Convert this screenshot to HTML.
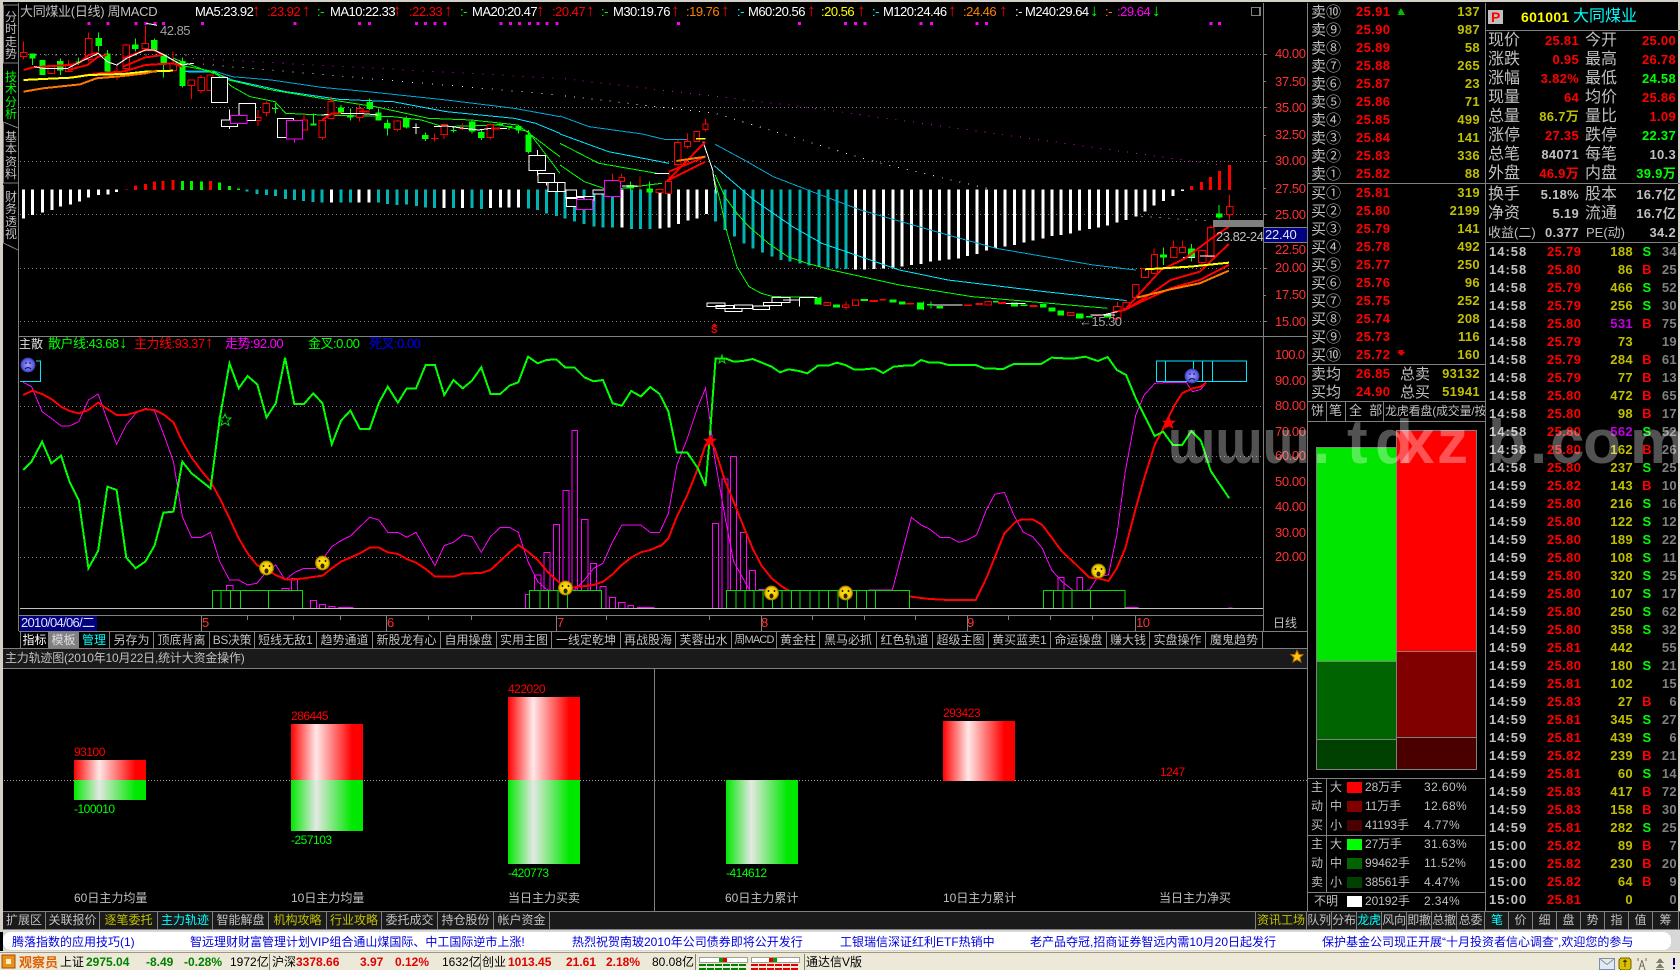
<!DOCTYPE html>
<html lang="zh"><head><meta charset="utf-8"><title>大同煤业</title>
<style>
html,body{margin:0;padding:0;background:#000}
body{position:relative;width:1680px;height:970px;overflow:hidden;font-family:"Liberation Sans","Noto Sans CJK SC",sans-serif;font-size:12px;color:#c0c0c0}
.a{position:absolute;white-space:nowrap}
svg{position:absolute;left:0;top:0}
svg *{vector-effect:non-scaling-stroke}
.n{font-size:13px;letter-spacing:-.5px;line-height:14px}
.ar{font-size:17px;line-height:14px;margin-left:-1px;font-family:"Liberation Sans",sans-serif}
.k{font-size:15px;line-height:18px;font-family:"Noto Sans CJK SC",sans-serif}
.v{font-size:13px;font-weight:bold;letter-spacing:.35px;line-height:18px}
.q{font-size:13px;font-weight:bold;letter-spacing:.3px;line-height:19px;text-align:right}
.l{font-size:16px;line-height:19px}
.r{text-align:right}
.o{color:#c0c000}.g{color:#00ff00}.red{color:#ff0000}.c{color:#00ffff}.m{color:#ff00ff}.w{color:#fff}
.b{position:absolute;top:632px;height:16px;line-height:16px;text-align:center;border-right:1px solid #808080;box-sizing:border-box;white-space:nowrap;overflow:hidden;font-size:12px}
.t{position:absolute;top:911px;height:18px;line-height:18px;text-align:center;border-right:1px solid #808080;box-sizing:border-box;white-space:nowrap;overflow:hidden;font-size:12px}
.ax{position:absolute;left:1275px;color:#ff3232;font-size:13px;letter-spacing:-.4px;line-height:14px}
.tab{position:absolute;left:4px;width:14px;text-align:center;font-size:12px;line-height:12.3px}
.lab{position:absolute;font-size:12px;letter-spacing:-.5px;line-height:14px;white-space:nowrap}
.tk{position:absolute;top:935px;color:#0000e0;font-size:12px;line-height:15px;white-space:nowrap}
.s{position:absolute;top:955px;font-size:12px;line-height:15px;white-space:nowrap;color:#000}
.sb{font-weight:bold}
</style></head><body>

<svg width="1680" height="970" viewBox="0 0 1680 970" shape-rendering="crispEdges">
<defs>
<linearGradient id="gr"><stop offset="0" stop-color="#f00"/><stop offset=".35" stop-color="#ffe8e8"/><stop offset=".85" stop-color="#f00"/><stop offset="1" stop-color="#f00"/></linearGradient>
<linearGradient id="gg"><stop offset="0" stop-color="#00e800"/><stop offset=".35" stop-color="#e4e8e4"/><stop offset=".85" stop-color="#00e800"/><stop offset="1" stop-color="#00e800"/></linearGradient>
<radialGradient id="fy"><stop offset="0" stop-color="#ffe820"/><stop offset=".75" stop-color="#f0c800"/><stop offset="1" stop-color="#806000"/></radialGradient>
<radialGradient id="fb"><stop offset="0" stop-color="#a0a0ff"/><stop offset=".8" stop-color="#5858e0"/><stop offset="1" stop-color="#303090"/></radialGradient>
<g id="fy1" shape-rendering="auto"><ellipse cx="0" cy="0" rx="7.5" ry="7.5" fill="url(#fy)"/><path d="M-3-3v2M3-3v2" stroke="#332200" stroke-width="1.5"/><ellipse cx="0" cy="3" rx="2" ry="2.5" fill="#332200"/></g>
<g id="fb1" shape-rendering="auto"><ellipse cx="0" cy="0" rx="7.5" ry="7.5" fill="url(#fb)"/><path d="M-3-2h2M1-2h2M-3 4q3-3 6 0" stroke="#101040" stroke-width="1" fill="none"/></g>
<clipPath id="wm"><rect x="1100" y="400" width="580" height="64"/></clipPath>
<clipPath id="chart"><rect x="19" y="3" width="1244" height="333"/></clipPath>
</defs>

<!-- frame -->
<rect x="0" y="0" width="1680" height="2" fill="#d4d0c8"/>
<rect x="0" y="0" width="3" height="932" fill="#d4d0c8"/>
<rect x="1678" y="2" width="2" height="928" fill="#d4d0c8"/>
<path fill="none" stroke="#808080" d="M18.5 3V631M19 336.500H1307M19 615.500H1263M1263.500 3V631M1307.500 3V911M1485.500 3V929M19 631.500H1307M3 648.500H1307M3 668.500H1307M3 911.500H1680M3 929.500H1680"/>
<rect x="3" y="649" width="1304" height="19" fill="#1a1a1a"/>
<rect x="3" y="912" width="1677" height="17" fill="#1a1a1a"/>

<!-- left tabs -->
<path fill="none" stroke="#808080" d="M3.500 5H18M3.500 5V63L18 63M3 122L6 123L18 128M3.500 123V183H18M3.500 185V243L18 250"/>

<!-- main grid -->
<path fill="none" stroke="#808080" stroke-dasharray="1 3" d="M20 54.500H1263M20 107.500H1263M20 161.500H1263M20 214.500H1263M20 268.500H1263M20 321.500H1263M20 406.500H1263M20 456.500H1263M20 507.500H1263M20 557.500H1263"/>
<path fill="none" stroke="#808080" d="M1263 54.500h4M1263 81.500h3M1263 107.500h4M1263 135.500h3M1263 161.500h4M1263 188.500h3M1263 214.500h4M1263 268.500h4M1263 295.500h3M1263 321.500h4"/>

<g clip-path="url(#chart)">
<!-- zoom1 group -->
<g transform="scale(.3571,.3333)">
<g fill="#f0f" opacity=".95"><path stroke="#f0f" stroke-width="3" stroke-dasharray="3 5" d="M245 71H255M298 71H308M377 71H387M405 71H415M430 71H440M454 71H464M563 71H573M822 71H832M1003 71H1013M1031 71H1041M1162 71H1172M1188 71H1198M1214 71H1224M1242 71H1252M1399 71H1409M1425 71H1435M1450 71H1460M1478 71H1488M1503 71H1513M1528 71H1538M1555 71H1565"/></g>
<path fill="none" stroke="#e000e0" stroke-dasharray="1 9" d="M540 175L1568 235"/>
<path fill="none" stroke="#e0e0e0" stroke-dasharray="1 9" d="M540 190L1568 285M100 165L540 165"/>
<!-- macd -->
<path fill="none" stroke="#fff" stroke-width="3" d="M66 568V655M91 568V645M119 568V638M145 568V630M170 568V620M197 568V614M222 568V605M248 568V593M276 568V585M302 568V583M326 568V576M928 568V608M1006 568V608M1034 568V608M1244 568V624M1295 568V624M1374 568V624M1401 568V622M1426 568V622M1452 568V622"/>
<path fill="none" stroke="#f00" stroke-width="3" d="M354 568V570M379 570V557M407 570V552M432 570V545M457 570V543M485 570V540M590 570V543"/>
<path fill="none" stroke="#00f000" stroke-width="3" d="M511 570V543M536 570V543M564 570V545M614 570V548M642 570V558M668 570V566"/>
<path fill="none" stroke="#00b4b4" stroke-width="3" d="M692 568V575M720 568V582M746 568V585M771 568V588M799 568V597M824 568V600M850 568V603M877 568V606M902 568V608M955 568V608M981 568V608M1060 568V608M1085 568V612M1112 568V615M1138 568V614M1166 568V618M1191 568V622M1217 568V624M1270 568V624M1322 568V624M1348 568V627M1480 568V625M1505 568V630M1530 568V640M1558 568V648"/>
<!-- MAs -->
<polyline fill="none" stroke="#00a8d8" points="510,213 600,213 650,230 760,240 900,262 1030,275 1250,300 1440,325 1568,350"/>
<polyline fill="none" stroke="#00e8ff" points="515,215 600,217 650,240 800,275 950,298 1100,305 1250,335 1440,355 1500,370 1568,400"/>
<polyline fill="none" stroke="#00ff00" points="458,165 510,197 600,215 640,240 760,270 900,295 1050,320 1200,355 1320,360 1450,375 1568,470"/>
<polyline fill="none" stroke="#00ff00" points="485,175 560,205 610,225 650,260 700,290 770,305 800,340 900,345 1100,350 1180,360 1240,380 1400,375 1480,395 1568,520"/>
<!-- wicks -->
<path fill="none" stroke="#f00" d="M66 125V178M143 195V220M192 180V215M248 98V185M327 190V240M353 130V210M407 78V155M485 155V212M536 240V297M563 225V280M588 225V272M722 330V378M746 305V350M852 342V390M903 355V420M927 290V355M1007 315V365M1113 360V395M1217 400V425M1244 370V417M1295 370V390M1373 370V418"/>
<path fill="none" stroke="#00ff00" d="M91 160V195M119 180V225M169 175V225M220 172V195M276 98V155M301 150V220M379 115V155M432 115V155M458 160V232M511 172V262M771 310V340M878 340V377M955 315V340M981 325V362M1035 295V330M1060 325V362M1085 358V407M1138 350V385M1191 397V423M1270 380V398M1322 360V400M1348 390V420M1400 370V380M1426 378V390M1452 378V400M1480 390V460"/>
<path fill="#000" stroke="#f00" d="M57 157h18v13h-18zM134 197h18v23h-18zM183 197h18v18h-18zM239 115h18v63h-18zM318 215h18v2h-18zM344 135h18v70h-18zM398 130h18v16h-18zM476 190h18v22h-18zM527 240h18v17h-18zM554 232h18v40h-18zM579 225h18v47h-18zM713 352h18v10h-18zM737 310h18v28h-18zM843 360h18v30h-18zM894 362h18v51h-18zM918 305h18v50h-18zM998 325h18v27h-18zM1104 363h18v25h-18zM1208 415h18v1h-18zM1235 373h18v30h-18zM1286 385h18v1h-18zM1364 373h18v40h-18z"/>
<path fill="#00ff00" d="M82 160h18v16h-18zM110 180h18v45h-18zM160 183h18v29h-18zM211 184h18v3h-18zM267 114h18v24h-18zM292 160h18v55h-18zM370 134h18v13h-18zM423 120h18v30h-18zM449 165h18v25h-18zM502 183h18v75h-18zM762 324h18v3h-18zM869 370h18v7h-18zM946 322h18v16h-18zM972 345h18v8h-18zM1026 306h18v21h-18zM1051 338h18v24h-18zM1076 369h18v17h-18zM1129 355h18v27h-18zM1182 405h18v12h-18zM1261 390h18v3h-18zM1313 364h18v30h-18zM1339 396h18v18h-18zM1391 372h18v3h-18zM1417 378h18v3h-18zM1443 378h18v14h-18zM1471 404h18v52h-18z"/>
<path fill="none" stroke="#fff" d="M642 328V387M1165 370V402M1155 382h20M1505 450V527M1530 547V557M410 70L440 76"/>
<path fill="#000" stroke="#fff" d="M592 232h45v75h-45zM620 360h45v20h-45zM669 310h47v52h-47zM777 355h45v58h-45zM1482 466h46v46h-46zM1507 520h46v27h-46zM1534 548h34v27h-34z"/>
<path fill="#000" stroke="#f0f" d="M645 346h46v25h-46zM802 361h45v56h-45z"/><path stroke="#f0f" d="M825 417V428"/>
<!-- thick MAs -->
<polyline fill="none" stroke="#f00" stroke-width="2" points="66,210 92,202 150,198 192,195 220,190 248,165 276,158"/>
<polyline fill="none" stroke="#f00" stroke-width="2" points="190,210 245,195 275,170 300,165"/>
<polyline fill="none" stroke="#f00" stroke-width="2" points="345,175 407,150 432,150 458,165"/>
<polyline fill="none" stroke="#f00" stroke-width="2" points="345,200 407,172 458,165"/>
<polyline fill="none" stroke="#f00" stroke-width="2" points="200,232 275,220 345,215 407,195 485,190 510,200"/>
<polyline fill="none" stroke="#ffff00" stroke-width="2" points="66,240 120,237 200,233 250,225 345,222 407,215 485,212"/>
<polyline fill="none" stroke="#ff7800" stroke-width="2" points="66,275 120,265 225,253 270,235 345,228 407,220 440,212"/>
<polyline fill="none" stroke="#fff" points="95,200 120,205 190,205 220,188 275,160 300,185 327,195 355,175 407,150 432,150 460,165 510,195 540,190"/>
<polyline fill="none" stroke="#fff" points="900,345 955,340 1005,340 1060,345"/>
<polyline fill="none" stroke="#fff" points="1215,380 1250,378 1300,385 1340,390 1375,385 1420,385"/>
<polyline fill="none" stroke="#f00" stroke-width="2" points="905,358 930,340 955,340"/>
<polyline fill="none" stroke="#f00" stroke-width="2" points="1005,335 1035,335"/>
<polyline fill="none" stroke="#f00" stroke-width="2" points="1375,385 1400,385"/>
</g>
<!-- zoom2 group -->
<g transform="translate(560,0) scale(.4847,.3333)">
<path stroke="#f0f" stroke-width="3" stroke-dasharray="3 5" fill="none" d="M241 71H250M491 71H500M586 71H595M607 71H616M626 71H635M742 71H751M763 71H772M857 71H866M877 71H886M1340 71H1349M1358 71H1367"/>
<path fill="none" stroke="#e000e0" stroke-dasharray="1 8" d="M10 236L500 320L1360 495"/>
<path fill="none" stroke="#e0e0e0" stroke-dasharray="1 8" d="M10 288L320 340L640 482L880 565M1200 650L1340 662"/>
<!-- macd -->
<path fill="none" stroke="#00b4b4" stroke-width="3" d="M10 568V655M30 568V665M50 568V672M70 568V680M89 568V683M108 568V683M147 568V687M166 568V687M186 568V687M321 568V665M340 568V690M360 568V710M380 568V730M398 568V745M418 568V758M437 568V770M456 568V780M475 568V785M495 568V790M514 568V797M534 568V800M553 568V803M572 568V805M590 568V807"/>
<path fill="none" stroke="#fff" stroke-width="3" d="M128 568V683M206 568V685M225 568V683M244 568V672M264 568V662M283 568V655M302 568V642M610 568V808M628 568V808M648 568V807M667 568V805M687 568V805M706 568V800M725 568V795M745 568V792M764 568V785M783 568V782M803 568V778M822 568V775M841 568V768M860 568V762M880 568V752M899 568V745M918 568V740M938 568V735M957 568V728M976 568V722M996 568V715M1015 568V708M1034 568V705M1053 568V700M1072 568V692M1092 568V687M1111 568V682M1130 568V677M1149 568V668M1168 568V660M1188 568V650M1207 568V635M1226 568V617M1245 568V603M1265 568V588M1284 568V573"/>
<path fill="none" stroke="#f00" stroke-width="3" d="M1303 570V558M1323 570V546M1342 570V531M1361 570V513M1381 570V495"/>
<!-- MAs -->
<polyline fill="none" stroke="#00a8d8" points="0,348 60,380 170,402 215,418 262,418"/>
<polyline fill="none" stroke="#00a8d8" points="320,433 380,480 440,530 520,575 620,630 800,705 900,745 1100,795 1188,810"/>
<polyline fill="none" stroke="#00e8ff" points="0,402 100,455 225,490"/>
<polyline fill="none" stroke="#00e8ff" points="318,497 360,550 400,600 480,680 540,730 600,760 700,810 800,840 1000,875 1170,902"/>
<polyline fill="none" stroke="#00ff00" points="0,430 80,490 200,520 225,520"/>
<polyline fill="none" stroke="#00ff00" points="320,525 340,590 365,640 390,680 430,730 470,770 510,790 560,810 700,855 850,890 1130,925"/>
<polyline fill="none" stroke="#00ff00" points="0,495 50,545 100,570 210,550"/>
<polyline fill="none" stroke="#00ff00" points="315,520 330,600 345,700 365,800 390,860 415,880 440,890 530,892"/>
<!-- candles -->
<path fill="none" stroke="#f00" d="M225 515V545M243 420V500M263 400V445M282 395V425M300 355V395M165 530V568M127 520V545M590 905V930M1150 905V960M1168 900V930M1226 745V822M1266 722V773M1284 722V758M1325 748V795M1381 585V660M1343 675V775"/>
<path fill="none" stroke="#00ff00" d="M145 545V570M185 545V580M1245 743V795M1303 732V785M1360 615V657M538 890V915M750 905V930M765 905V925"/>
<path fill="none" stroke="#f00" stroke-width="1" d="M108 520V545"/>
<path fill="#000" stroke="#fff" d="M-5 547h15v28h-15zM12 570h22v25h-22zM13 592h37v28h-37zM35 590h35v10h-35zM68 570h35v12h-35z"/>
<path fill="#000" stroke="#f0f" d="M34 598h33v30h-33zM92 541h33v48h-33z"/>
<path fill="#000" stroke="#f00" d="M122 532h11v13h-11zM198 568h14v10h-14zM218 545h12v35h-12zM236 427h14v67h-14zM257 425h12v15h-12zM276 395h12v30h-12zM295 372h10v16h-10zM545 908h13v8h-13zM583 915h13v7h-13zM603 900h13v16h-13zM640 902h15v2h-15zM660 898h12v2h-12zM715 910h14v2h-14zM835 915h14v2h-14zM858 911h14v2h-14zM877 905h13v10h-13zM905 908h14v2h-14zM970 917h14v2h-14zM1047 938h13v8h-13zM1100 945h14v2h-14zM1142 920h15v35h-15zM1162 908h13v17h-13zM1181 853h14v40h-14zM1200 805h14v27h-14zM1220 763h13v57h-13zM1260 742h13v31h-13zM1278 742h13v16h-13zM1317 752h16v36h-16zM1336 682h13v88h-13zM1375 620h13v23h-13z"/>
<path fill="#00ff00" d="M137 555h16v11h-16zM178 565h14v12h-14zM525 892h13v21h-13zM563 914h15v9h-15zM620 897h15v6h-15zM680 898h14v10h-14zM699 905h14v9h-14zM737 908h14v20h-14zM757 912h13v4h-13zM777 918h13v7h-13zM893 903h12v4h-12zM930 908h15v12h-15zM950 914h14v4h-14zM990 912h14v10h-14zM1008 922h14v13h-14zM1026 932h14v15h-14zM1065 940h15v16h-15zM1085 948h14v5h-14zM1122 942h15v10h-15zM1238 763h14v10h-14zM1296 745h14v28h-14zM1353 640h14v12h-14z"/>
<path fill="#000" stroke="#fff" d="M303 909h37v10h-37zM322 917h36v8h-36zM340 925h35v10h-35zM360 915h37v10h-37zM398 918h34v10h-34zM420 908h37v9h-37zM437 893h38v14h-38z"/>
<path fill="none" stroke="#fff" d="M460 900h35M495 892h35M494 892V920M128 558h32M195 520h30M770 915h60M920 910h40M1095 945h50M1285 773h25M1320 768h30"/>
<path fill="none" stroke="#fff" stroke-width="1" d="M295 425L315 510L322 580"/>
<rect x="281" y="414" width="19" height="4" fill="#ff0"/>
<!-- thick -->
<path fill="none" stroke="#f00" stroke-width="2" d="M220 545L300 425M225 515L300 470M225 540L300 485"/>
<path fill="none" stroke="#ff7800" stroke-width="2" d="M240 483L300 470"/>
<polyline fill="none" stroke="#f00" stroke-width="2" points="1140,937 1165,930 1190,890 1240,810 1290,775 1340,720 1380,680"/>
<polyline fill="none" stroke="#f00" stroke-width="2" points="1165,930 1210,890 1260,840 1320,815 1380,732"/>
<polyline fill="none" stroke="#f00" stroke-width="2" points="1165,930 1200,905 1260,865 1320,840 1380,795"/>
<polyline fill="none" stroke="#ff7800" stroke-width="2" points="1190,893 1260,868 1320,850 1380,812"/>
<polyline fill="none" stroke="#ff0" stroke-width="2" points="1207,808 1300,800 1380,788"/>
<path fill="none" stroke="#fff" d="M1120 945L1150 935"/>
<!-- S marker -->
<path fill="#f00" d="M319 970l6 8h-12z"/>
</g>
<rect x="1213" y="220" width="50" height="7" fill="#808080"/>
</g>

<!-- right axis blue box -->
<rect x="1263.500" y="227.500" width="44" height="15" fill="#000080" stroke="#808080"/>

<!-- indicator -->
<g transform="translate(0,335) scale(.42105,.3333)">
<polyline fill="none" stroke="#f0f" points="55,142 75,155 100,230 122,250 145,273 165,273 187,260 210,195 233,177 255,255 277,328 300,270 322,235 345,220 367,228 388,295 412,380 433,545 455,607 478,607 500,592 522,680 545,735 567,735 588,750 610,745 633,710 655,690 677,735 700,712 722,700 750,700 788,635 810,617 832,603 855,575 878,547 900,555 921,592 945,592 966,607 988,592 1033,692 1055,632 1077,622 1099,600 1121,605 1143,652 1165,605 1188,577 1210,577 1231,592 1254,680 1277,740 1300,765 1343,770 1365,765 1388,735 1410,700 1432,685 1455,620 1477,570 1522,570 1544,592 1568,592"/>
<path fill="none" stroke="#f0f" d="M538 820V752H553V820M670 820V760H686V820M692 820V730H707V820M737 820V797H752V820M759 820V808H773V820M781 820V814H796V820M803 817H840M1248 820V778H1258V820M1270 820V720H1285V820M1292 820V652H1306V820M1315 820V568H1329V820M1337 820V466H1351V820M1359 820V286H1372V820M1381 820V553H1396V820M1403 820V685H1417V820M1425 820V755H1439V820M1447 820V787H1462V820M1469 820V802H1484V820M1491 820V811H1505V820M1513 817H1555"/>
<polyline fill="none" stroke="#f00" stroke-width="2" points="55,180 77,167 100,177 122,192 145,215 165,228 187,235 210,225 233,203 255,222 277,240 300,240 322,232 345,223 367,225 388,238 412,262 433,320 455,368 480,410 500,440 522,490 545,550 567,610 588,655 610,690 633,705 655,720 677,733 700,733 722,730 766,722 788,700 810,680 832,668 855,655 878,638 900,638 921,652 945,657 966,672 988,683 1011,702 1033,725 1077,725 1099,716 1143,714 1165,705 1188,678 1210,652 1231,630 1254,650 1277,675 1300,710 1343,760 1410,750 1432,740 1455,718 1477,690 1499,668 1522,652 1544,645 1568,632"/>
<polyline fill="none" stroke="#00ff00" stroke-width="2" points="55,405 75,380 100,320 122,385 145,362 165,440 187,495 210,700 233,648 255,455 277,465 300,668 322,700 345,680 367,632 388,533 412,530 433,380 455,415 500,460 522,250 545,85 567,160 588,123 611,148 633,247 655,205 677,68 699,207 722,207 744,175 766,205 788,328 810,257 832,227 855,282 878,282 900,203 921,155 945,203 966,160 988,160 1011,90 1033,90 1055,180 1077,135 1099,160 1121,137 1143,97 1165,177 1188,177 1210,152 1231,142 1254,65 1277,85 1298,75 1321,73 1343,98 1365,98 1388,127 1410,139 1432,135 1455,205 1477,212 1499,168 1522,184 1544,156 1568,178"/>
<path fill="#000" stroke="#00e000" d="M505 766H719V820H505ZM1258 766H1429V820H1258Z"/>
<path fill="none" stroke="#00e000" d="M525 766V820M547 766V820M571 766V820M638 766V820M1282 766V820M1303 766V820M1325 766V820M1348 766V820"/>
<path fill="none" stroke="#00e8ff" d="M47 140H96V78H85"/>
</g>
<g transform="translate(660,335) scale(.42105,.3333)">
<polyline fill="none" stroke="#f0f" points="0,590 20,535 40,390 65,310 90,215 108,160 118,250 130,370 155,550 175,680 197,730 215,770 552,765 597,547 620,570 640,582 665,607 688,607 710,622 730,615 752,600 775,525 795,478 818,472 840,540 863,592 885,605 908,640 930,705 955,740 985,770 1020,765 1040,725 1065,720 1085,600 1105,410 1130,240 1150,180 1175,145 1210,142 1250,142 1265,170 1285,163 1297,143"/>
<path fill="none" stroke="#f0f" d="M125 820V565H139V820M147 820V432H161V820M167 820V365H182V820M191 820V592H205V820M213 820V706H227V820M235 820V763H250M945 820V727H959V820M990 820V727H1004V820M1106 818H1137M1350 819H1360"/>
<polyline fill="none" stroke="#f00" stroke-width="2" points="0,635 20,610 40,545 65,480 90,400 108,330 118,318 130,340 155,440 175,500 197,570 220,640 240,690 265,730 290,755 310,770 400,780 595,785 640,792 685,795 750,795 775,730 818,595 845,560 860,553 885,553 908,570 955,650 985,685 1020,728 1040,730 1065,738 1085,700 1105,640 1130,520 1150,430 1175,330 1195,280 1220,215 1240,175 1265,160 1285,155 1297,143"/>
<polyline fill="none" stroke="#00ff00" stroke-width="2" points="0,180 20,230 40,353 65,353 90,400 108,453 118,310 132,70 155,70 175,80 197,78 220,72 240,82 265,95 285,112 305,103 330,108 350,115 375,92 400,92 420,83 440,90 462,104 485,103 510,100 530,114 555,95 580,92 600,92 620,75 640,83 665,83 685,90 750,90 770,100 815,102 840,87 905,87 930,68 960,70 985,70 1010,65 1040,78 1063,66 1085,105 1107,120 1130,190 1175,303 1195,290 1218,330 1240,330 1262,288 1285,318 1308,408 1352,490"/>
<path fill="#000" stroke="#00e000" d="M158 766H592V820H158ZM911 766H1104V820H911Z"/>
<path fill="none" stroke="#00e000" d="M180 766V820M202 766V820M223 766V820M245 766V820M267 766V820M290 766V820M312 766V820M333 766V820M356 766V820M378 766V820M400 766V820M423 766V820M445 766V820M467 766V820M490 766V820M512 766V820M935 766V820M957 766V820M978 766V820M1022 766V820"/>
<path fill="none" stroke="#00e8ff" d="M1179 78H1393V140H1179ZM1201 78V140M1267 78V140M1288 78V140M1312 78V140"/>
</g>
<path stroke="#c0c0c0" d="M20 608.500H1263"/>

<!-- stars -->
<g shape-rendering="auto">
<path transform="translate(225,420)" fill="none" stroke="#00e000" d="M0-6L1.700-2L6-2L2.700 1L4 5.500L0 3L-4 5.500L-2.700 1L-6-2L-1.700-2Z"/>
<path transform="translate(722,359)" fill="none" stroke="#00e000" d="M0-4L1-1L4-1L2 1L3 4L0 2L-3 4L-2 1L-4-1L-1-1Z"/>
<path transform="translate(710,441)" fill="#f00" d="M0-7L1.900-2.300L7-2.300L3 1.100L4.400 6L0 3.200L-4.400 6L-3 1.100L-7-2.300L-1.900-2.300Z"/>
<path transform="translate(1169,423)" fill="#f00" d="M0-7L1.900-2.300L7-2.300L3 1.100L4.400 6L0 3.200L-4.400 6L-3 1.100L-7-2.300L-1.900-2.300Z"/>
</g>
<!-- faces -->
<use href="#fb1" x="28" y="365"/><use href="#fb1" x="1192" y="376"/>
<use href="#fy1" x="266.500" y="568"/><use href="#fy1" x="322.500" y="563"/><use href="#fy1" x="565.500" y="588"/><use href="#fy1" x="771.500" y="593"/><use href="#fy1" x="845.500" y="593"/><use href="#fy1" x="1098.500" y="571"/>

<!-- date row ticks -->
<path fill="none" stroke="#808080" d="M201.500 616V631M386.500 616V631M556.500 616V631M761.500 616V631M967.500 616V631M1135.500 616V631M247.500 616v4M293.500 616v4M340.500 616v4M428.500 616v4M471.500 616v4M606.500 616v4M709.500 616v4M812.500 616v4M864.500 616v4M915.500 616v4M1008.500 616v4M1050.500 616v4M1092.500 616v4"/>
<rect x="20" y="616" width="77" height="15" fill="#000080"/>
<rect x="49" y="632" width="29" height="16" fill="#808080"/>

<!-- order book dividers -->
<path fill="none" stroke="#808080" d="M1307 183.500H1680M1307 364.500H1485M1307 401.500H1485M1307 421.500H1485M1485 30.500H1680M1485 242.500H1680M1326.500 401V421M1345.500 401V421M1383.500 401V421"/>
<path fill="#00c000" d="M1398 13h6l-3-5zM1397 15h8l-4-4z"/>
<path fill="#e00000" d="M1398 350h6l-3 5zM1397 352h8l-4 4z"/>
<rect x="1488" y="10" width="15" height="14" fill="#c0c0c0"/>

<!-- volume blocks -->
<rect x="1316.500" y="447.500" width="80" height="214" fill="#00e600" stroke="#808080"/>
<rect x="1316.500" y="661.500" width="80" height="78" fill="#006400" stroke="#808080"/>
<rect x="1316.500" y="739.500" width="80" height="30" fill="#004000" stroke="#808080"/>
<rect x="1396.500" y="430.500" width="80" height="221" fill="#ff0000" stroke="#808080"/>
<rect x="1396.500" y="651.500" width="80" height="86" fill="#800000" stroke="#808080"/>
<rect x="1396.500" y="737.500" width="80" height="32" fill="#4b0000" stroke="#808080"/>

<!-- legend -->
<path fill="none" stroke="#808080" d="M1307 778.500H1485M1307 835.500H1485M1307 892.500H1485M1326.500 778V892"/>
<rect x="1347" y="782" width="15" height="11" fill="#ff0000"/>
<rect x="1347" y="801" width="15" height="11" fill="#800000"/>
<rect x="1347" y="820" width="15" height="11" fill="#4b0000"/>
<rect x="1347" y="839" width="15" height="11" fill="#00ff00"/>
<rect x="1347" y="858" width="15" height="11" fill="#006400"/>
<rect x="1347" y="877" width="15" height="11" fill="#004000"/>
<rect x="1347" y="896" width="15" height="11" fill="#ffffff"/>

<!-- bottom panel -->
<path stroke="#a0a0a0" stroke-dasharray="1 2" d="M4 780.500H1307"/>
<path stroke="#808080" d="M654.500 668V911"/>
<rect x="74" y="760" width="72" height="20" fill="url(#gr)"/><rect x="74" y="780" width="72" height="20" fill="url(#gg)"/>
<rect x="291" y="724" width="72" height="56" fill="url(#gr)"/><rect x="291" y="780" width="72" height="51" fill="url(#gg)"/>
<rect x="508" y="697" width="72" height="83" fill="url(#gr)"/><rect x="508" y="780" width="72" height="84" fill="url(#gg)"/>
<rect x="726" y="780" width="72" height="84" fill="url(#gg)"/>
<rect x="943" y="721" width="72" height="60" fill="url(#gr)"/>
<path transform="translate(1297,656.500)" fill="#ffc800" stroke="#c07000" shape-rendering="auto" d="M0-6L1.800-2L6-1.800L2.800 1L4 5.500L0 3.200L-4 5.500L-2.800 1L-6-1.800L-1.800-2Z"/>

<!-- ticker -->
<rect x="3" y="930" width="1677" height="24" fill="#d8d8d8"/>
<rect x="3" y="932" width="1668" height="18" rx="8" fill="#fff"/>
<rect x="0" y="951" width="1680" height="19" fill="#ece9d8"/>
<path stroke="#a09880" d="M0 952.500H1680"/>
<path stroke="#808070" d="M269.500 954V970M480.500 954V970M695.500 954V970M804.500 954V970"/>

<!-- status blocks -->
<rect x="2" y="955" width="13" height="13" fill="#e89020" stroke="#a05000"/>
<rect x="6" y="959" width="5" height="5" fill="#fff0c0"/>
<path fill="#fff" stroke="#a0a090" d="M699.500 957.500h48v5h-48zM751.500 957.500h48v5h-48z"/>
<rect x="719" y="958" width="4" height="4" fill="#00a000"/><rect x="723" y="958" width="4" height="4" fill="#e00000"/>
<rect x="769" y="958" width="4" height="4" fill="#e00000"/><rect x="773" y="958" width="4" height="4" fill="#00a000"/>
<path stroke="#008000" stroke-width="2" stroke-dasharray="7 1" d="M699 965H747M699 969H747"/>
<path stroke="#e00000" stroke-width="2" stroke-dasharray="7 1" d="M751 965H799M751 969H799"/>
<!-- status icons -->
<path fill="#dfe8f4" stroke="#7890a8" d="M1599.500 958.500h15v11h-15zM1599.500 958.500l7.500 6 7.500-6"/>
<rect x="1619" y="958" width="12" height="12" rx="3" fill="#d8c000" stroke="#706000"/><path stroke="#504000" d="M1625 960v7M1623 962l2-2 2 2"/>
<path fill="none" stroke="#707060" d="M1642 960l-3 10M1642 960l3 10M1640 966h4M1638 958v3M1646 958v3"/>
<path fill="#808070" d="M1660 958l4 5h-8zM1660 963l4 5h-8zM1656 969h8v1h-8z"/>
<path stroke="#000080" stroke-width="2" d="M1674 958v7M1674 967v2"/>
</svg>

<!-- left tab text -->
<div class="tab" style="top:11px">分<br>时<br>走<br>势</div>
<div class="tab g" style="top:71px">技<br>术<br>分<br>析</div>
<div class="tab" style="top:131px">基<br>本<br>资<br>料</div>
<div class="tab" style="top:191px">财<br>务<br>透<br>视</div>

<!-- top header -->
<div class="a n" style="left:20px;top:5px;letter-spacing:-.3px">大同煤业(日线) 周MACD</div>
<div class="a n w" style="left:195px;top:5px">MA5:23.92</div><div class="a ar red" style="left:253px;top:4px">↑</div><div class="a n red" style="left:267px;top:5px">:23.92</div><div class="a ar red" style="left:303px;top:4px">↑</div><div class="a n g" style="left:317px;top:5px">:-</div>
<div class="a n w" style="left:330px;top:5px">MA10:22.33</div><div class="a ar red" style="left:394px;top:4px">↑</div><div class="a n red" style="left:409px;top:5px">:22.33</div><div class="a ar red" style="left:445px;top:4px">↑</div><div class="a n g" style="left:460px;top:5px">:-</div>
<div class="a n w" style="left:472px;top:5px">MA20:20.47</div><div class="a ar red" style="left:537px;top:4px">↑</div><div class="a n red" style="left:552px;top:5px">:20.47</div><div class="a ar red" style="left:587px;top:4px">↑</div><div class="a n g" style="left:601px;top:5px">:-</div>
<div class="a n w" style="left:613px;top:5px">M30:19.76</div><div class="a ar red" style="left:672px;top:4px">↑</div><div class="a n" style="left:686px;top:5px;color:#ff8000">:19.76</div><div class="a ar red" style="left:722px;top:4px">↑</div><div class="a n c" style="left:737px;top:5px">:-</div>
<div class="a n w" style="left:748px;top:5px">M60:20.56</div><div class="a ar red" style="left:808px;top:4px">↑</div><div class="a n" style="left:821px;top:5px;color:#ffff00">:20.56</div><div class="a ar red" style="left:858px;top:4px">↑</div><div class="a n c" style="left:872px;top:5px">:-</div>
<div class="a n w" style="left:883px;top:5px">M120:24.46</div><div class="a ar red" style="left:949px;top:4px">↑</div><div class="a n" style="left:963px;top:5px;color:#ff8000">:24.46</div><div class="a ar red" style="left:1000px;top:4px">↑</div><div class="a n w" style="left:1015px;top:5px">:-</div>
<div class="a n w" style="left:1025px;top:5px">M240:29.64</div><div class="a ar g" style="left:1091px;top:4px">↓</div><div class="a n" style="left:1105px;top:5px;color:#ff8000">:-</div><div class="a n m" style="left:1117px;top:5px">:29.64</div><div class="a ar g" style="left:1153px;top:4px">↓</div>
<div class="a" style="left:1251px;top:7px;width:7px;height:7px;border:1px solid #808080;border-right-width:2px"></div>

<div class="a n" style="left:160px;top:24px;color:#a0a0a0">42.85</div>
<div class="a n" style="left:1079px;top:315px;color:#a0a0a0">←15.30</div>
<div class="a n" style="left:1216px;top:230px;color:#c0c0c0">23.82-24</div>
<div class="a red" style="left:711px;top:326px;font-size:10px;line-height:10px;font-weight:bold">S</div>

<!-- main axis -->
<div class="ax" style="top:47px">40.00</div><div class="ax" style="top:75px">37.50</div><div class="ax" style="top:101px">35.00</div><div class="ax" style="top:128px">32.50</div><div class="ax" style="top:154px">30.00</div><div class="ax" style="top:182px">27.50</div><div class="ax" style="top:208px">25.00</div><div class="ax" style="top:261px">20.00</div><div class="ax" style="top:288px">17.50</div><div class="ax" style="top:315px">15.00</div>
<div class="ax" style="top:243px">22.50</div>
<div class="a n" style="left:1265px;top:228px;color:#e0e0ff;letter-spacing:-.2px">22.40</div>

<!-- indicator axis -->
<div class="ax" style="top:348px;letter-spacing:-.6px">100.0</div><div class="ax" style="top:374px">90.00</div><div class="ax" style="top:399px">80.00</div><div class="ax" style="top:425px">70.00</div><div class="ax" style="top:449px">60.00</div><div class="ax" style="top:475px">50.00</div><div class="ax" style="top:500px">40.00</div><div class="ax" style="top:526px">30.00</div><div class="ax" style="top:550px">20.00</div>

<!-- indicator header -->
<div class="a" style="left:19px;top:337px;line-height:14px;color:#e0e0e0">主散</div>
<div class="a n g" style="left:48px;top:337px">散户线:43.68</div><div class="a ar g" style="left:120px;top:336px">↓</div>
<div class="a n red" style="left:134px;top:337px">主力线:93.37</div><div class="a ar red" style="left:206px;top:336px">↑</div>
<div class="a n m" style="left:225px;top:337px">走势:92.00</div>
<div class="a n g" style="left:308px;top:337px">金叉:0.00</div>
<div class="a n" style="left:369px;top:337px;color:#0000ff">死叉:0.00</div>

<!-- date row -->
<div class="a n" style="left:21px;top:616px;color:#e0e0ff;letter-spacing:-.7px">2010/04/06/二</div>
<div class="a n" style="left:202px;top:616px;color:#ff3232">5</div><div class="a n" style="left:387px;top:616px;color:#ff3232">6</div><div class="a n" style="left:557px;top:616px;color:#ff3232">7</div><div class="a n" style="left:761px;top:616px;color:#ff3232">8</div><div class="a n" style="left:967px;top:616px;color:#ff3232">9</div><div class="a n" style="left:1136px;top:616px;color:#ff3232">10</div>
<div class="a" style="left:1273px;top:616px;line-height:14px">日线</div>

<!-- indicator buttons -->
<div class="b w" style="left:20px;width:29px;border-left:1px solid #808080">指标</div>
<div class="b" style="left:49px;width:30px;color:#e0e0e0">模板</div>
<div class="b c" style="left:79px;width:31px">管理</div>
<div class="b" style="left:110px;width:44px">另存为</div>
<div class="b" style="left:154px;width:56px">顶底背离</div>
<div class="b" style="left:210px;width:45px;letter-spacing:-.4px">BS决策</div>
<div class="b" style="left:255px;width:62px">短线无敌1</div>
<div class="b" style="left:317px;width:56px">趋势通道</div>
<div class="b" style="left:373px;width:68px">新股龙有心</div>
<div class="b" style="left:441px;width:56px">自用操盘</div>
<div class="b" style="left:497px;width:55px">实用主图</div>
<div class="b" style="left:552px;width:69px">一线定乾坤</div>
<div class="b" style="left:621px;width:55px">再战股海</div>
<div class="b" style="left:676px;width:56px">芙蓉出水</div>
<div class="b" style="left:732px;width:45px;font-size:11px;letter-spacing:-.8px">周MACD</div>
<div class="b" style="left:777px;width:43px">黄金柱</div>
<div class="b" style="left:820px;width:57px">黑马必抓</div>
<div class="b" style="left:877px;width:56px">红色轨道</div>
<div class="b" style="left:933px;width:56px">超级主图</div>
<div class="b" style="left:989px;width:62px">黄买蓝卖1</div>
<div class="b" style="left:1051px;width:56px">命运操盘</div>
<div class="b" style="left:1107px;width:43px">赚大钱</div>
<div class="b" style="left:1150px;width:56px">实盘操作</div>
<div class="b" style="left:1206px;width:57px">魔鬼趋势</div>

<div class="a" style="left:5px;top:650px;line-height:16px;letter-spacing:-.2px">主力轨迹图(2010年10月22日,统计大资金操作)</div>

<!-- bottom panel text -->
<div class="lab red" style="left:74px;top:745px">93100</div>
<div class="lab g" style="left:74px;top:802px">-100010</div>
<div class="lab red" style="left:291px;top:709px">286445</div>
<div class="lab g" style="left:291px;top:833px">-257103</div>
<div class="lab red" style="left:508px;top:682px">422020</div>
<div class="lab g" style="left:508px;top:866px">-420773</div>
<div class="lab g" style="left:726px;top:866px">-414612</div>
<div class="lab red" style="left:943px;top:706px">293423</div>
<div class="lab red" style="left:1160px;top:765px">1247</div>
<div class="a" style="left:74px;top:890px;line-height:16px">60日主力均量</div>
<div class="a" style="left:291px;top:890px;line-height:16px">10日主力均量</div>
<div class="a" style="left:508px;top:890px;line-height:16px">当日主力买卖</div>
<div class="a" style="left:725px;top:890px;line-height:16px">60日主力累计</div>
<div class="a" style="left:943px;top:890px;line-height:16px">10日主力累计</div>
<div class="a" style="left:1159px;top:890px;line-height:16px">当日主力净买</div>

<!-- bottom tabs -->
<div class="t" style="left:3px;width:43px">扩展区</div>
<div class="t" style="left:46px;width:54px">关联报价</div>
<div class="t o" style="left:100px;width:58px">逐笔委托</div>
<div class="t c" style="left:158px;width:55px">主力轨迹</div>
<div class="t" style="left:213px;width:56px">智能解盘</div>
<div class="t o" style="left:269px;width:58px">机构攻略</div>
<div class="t o" style="left:327px;width:55px">行业攻略</div>
<div class="t" style="left:382px;width:56px">委托成交</div>
<div class="t" style="left:438px;width:56px">持仓股份</div>
<div class="t" style="left:494px;width:56px">帐户资金</div>
<div class="t o" style="left:1255px;width:52px;border-left:1px solid #808080">资讯工场</div>
<div class="t" style="left:1307px;width:25px;letter-spacing:-.3px">队列</div>
<div class="t" style="left:1332px;width:25px;letter-spacing:-.3px">分布</div>
<div class="t c" style="left:1357px;width:25px;letter-spacing:-.3px">龙虎</div>
<div class="t" style="left:1382px;width:25px;letter-spacing:-.3px">风向</div>
<div class="t" style="left:1407px;width:25px;letter-spacing:-.3px">即撤</div>
<div class="t" style="left:1432px;width:25px;letter-spacing:-.3px">总撤</div>
<div class="t" style="left:1457px;width:28px;letter-spacing:-.3px">总委</div>
<div class="t c" style="left:1486px;width:23px">笔</div>
<div class="t" style="left:1509px;width:24px">价</div>
<div class="t" style="left:1533px;width:24px">细</div>
<div class="t" style="left:1557px;width:24px">盘</div>
<div class="t" style="left:1581px;width:24px">势</div>
<div class="t" style="left:1605px;width:24px">指</div>
<div class="t" style="left:1629px;width:24px">值</div>
<div class="t" style="left:1653px;width:26px">筹</div>

<!-- order book -->
<div class="a k" style="left:1311px;top:3px">卖⑩<br>卖⑨<br>卖⑧<br>卖⑦<br>卖⑥<br>卖⑤<br>卖④<br>卖③<br>卖②<br>卖①</div>
<div class="a v red" style="left:1356px;top:3px">25.91<br>25.90<br>25.89<br>25.88<br>25.87<br>25.86<br>25.85<br>25.84<br>25.83<br>25.82</div>
<div class="a v o r" style="left:1430px;width:50px;top:3px">137<br>987<br>58<br>265<br>23<br>71<br>499<br>141<br>336<br>88</div>
<div class="a k" style="left:1311px;top:184px">买①<br>买②<br>买③<br>买④<br>买⑤<br>买⑥<br>买⑦<br>买⑧<br>买⑨<br>买⑩</div>
<div class="a v red" style="left:1356px;top:184px">25.81<br>25.80<br>25.79<br>25.78<br>25.77<br>25.76<br>25.75<br>25.74<br>25.73<br>25.72</div>
<div class="a v o r" style="left:1430px;width:50px;top:184px">319<br>2199<br>141<br>492<br>250<br>96<br>252<br>208<br>116<br>160</div>
<div class="a k" style="left:1311px;top:365px">卖均<br>买均</div>
<div class="a v red" style="left:1356px;top:365px">26.85<br>24.90</div>
<div class="a k" style="left:1400px;top:365px">总卖<br>总买</div>
<div class="a v o r" style="left:1430px;width:50px;top:365px">93132<br>51941</div>
<div class="a" style="left:1311px;top:403px;line-height:16px;font-size:13px">饼</div>
<div class="a" style="left:1329px;top:403px;line-height:16px;font-size:13px">笔</div>
<div class="a" style="left:1349px;top:403px;line-height:16px;font-size:13px">全&nbsp;&nbsp;部</div>
<div class="a" style="left:1385px;top:403px;width:100px;overflow:hidden;line-height:16px;font-size:12px;letter-spacing:-.2px">龙虎看盘(成交量/按</div>

<!-- quote header -->
<div class="a" style="left:1491px;top:9px;color:#f00;font-size:14px;font-weight:bold;line-height:16px">P</div>
<div class="a" style="left:1521px;top:9px;color:#ffff00;font-size:14px;font-weight:bold;letter-spacing:.3px;line-height:16px">601001</div>
<div class="a c" style="left:1573px;top:7px;font-size:16px;line-height:20px">大同煤业</div>

<div class="a l" style="left:1488px;top:31px">现价<br>涨跌<br>涨幅<br>现量<br>总量<br>涨停<br>总笔<br>外盘</div>
<div class="a q" style="left:1510px;width:69px;top:31px"><span class="red">25.81</span><br><span class="red">0.95</span><br><span class="red">3.82%</span><br><span class="red">64</span><br><span class="o">86.7万</span><br><span class="red">27.35</span><br><span>84071</span><br><span class="red">46.9万</span></div>
<div class="a l" style="left:1585px;top:31px">今开<br>最高<br>最低<br>均价<br>量比<br>跌停<br>每笔<br>内盘</div>
<div class="a q" style="left:1607px;width:69px;top:31px"><span class="red">25.00</span><br><span class="red">26.78</span><br><span class="g">24.58</span><br><span class="red">25.86</span><br><span class="red">1.09</span><br><span class="g">22.37</span><br><span>10.3</span><br><span class="g">39.9万</span></div>
<div class="a l" style="left:1488px;top:184.500px">换手<br>净资</div>
<div class="a" style="left:1488px;top:222.500px;font-size:13px;line-height:19px">收益(二)</div>
<div class="a q" style="left:1510px;width:69px;top:184.500px">5.18%<br>5.19<br>0.377</div>
<div class="a l" style="left:1585px;top:184.500px">股本<br>流通</div>
<div class="a" style="left:1586px;top:222.500px;font-size:13px;line-height:19px">PE(动)</div>
<div class="a q" style="left:1607px;width:69px;top:184.500px">16.7亿<br>16.7亿<br>34.2</div>

<!-- ticks -->
<div class="a v" style="left:1489px;top:243px;letter-spacing:1px">14:58<br>14:58<br>14:58<br>14:58<br>14:58<br>14:58<br>14:58<br>14:58<br>14:58<br>14:58<br>14:58<br>14:58<br>14:58<br>14:59<br>14:59<br>14:59<br>14:59<br>14:59<br>14:59<br>14:59<br>14:59<br>14:59<br>14:59<br>14:59<br>14:59<br>14:59<br>14:59<br>14:59<br>14:59<br>14:59<br>14:59<br>14:59<br>14:59<br>15:00<br>15:00<br>15:00<br>15:00</div>
<div class="a v red" style="left:1547px;top:243px">25.79<br>25.80<br>25.79<br>25.79<br>25.80<br>25.79<br>25.79<br>25.79<br>25.80<br>25.80<br>25.80<br>25.80<br>25.80<br>25.82<br>25.80<br>25.80<br>25.80<br>25.80<br>25.80<br>25.80<br>25.80<br>25.80<br>25.81<br>25.80<br>25.81<br>25.83<br>25.81<br>25.81<br>25.82<br>25.81<br>25.83<br>25.83<br>25.81<br>25.82<br>25.82<br>25.82<br>25.81</div>
<div class="a v o r" style="left:1590px;width:43px;top:243px">188<br>86<br>466<br>256<br><span style="color:#c000e0">531</span><br>73<br>284<br>77<br>472<br>98<br><span style="color:#c000e0">562</span><br>162<br>237<br>143<br>216<br>122<br>189<br>108<br>320<br>107<br>250<br>358<br>442<br>180<br>102<br>27<br>345<br>439<br>239<br>60<br>417<br>158<br>282<br>89<br>230<br>64<br>0</div>
<div class="a v" style="left:1641px;width:12px;top:243px;text-align:center"><span class="g">S</span><br><span class="red">B</span><br><span class="g">S</span><br><span class="g">S</span><br><span class="red">B</span><br>&nbsp;<br><span class="red">B</span><br><span class="red">B</span><br><span class="red">B</span><br><span class="red">B</span><br><span class="g">S</span><br><span class="red">B</span><br><span class="g">S</span><br><span class="red">B</span><br><span class="g">S</span><br><span class="g">S</span><br><span class="g">S</span><br><span class="g">S</span><br><span class="g">S</span><br><span class="g">S</span><br><span class="g">S</span><br><span class="g">S</span><br>&nbsp;<br><span class="g">S</span><br>&nbsp;<br><span class="red">B</span><br><span class="g">S</span><br><span class="g">S</span><br><span class="red">B</span><br><span class="g">S</span><br><span class="red">B</span><br><span class="red">B</span><br><span class="g">S</span><br><span class="red">B</span><br><span class="red">B</span><br><span class="red">B</span><br>&nbsp;</div>
<div class="a v r" style="left:1650px;width:27px;top:243px;color:#808080">34<br>25<br>52<br>30<br>75<br>19<br>61<br>13<br>65<br>17<br>52<br>26<br>25<br>10<br>16<br>12<br>22<br>11<br>25<br>17<br>62<br>32<br>55<br>21<br>15<br>6<br>27<br>6<br>21<br>14<br>72<br>30<br>25<br>7<br>20<br>9<br>0</div>

<!-- legend text -->
<div class="a" style="left:1311px;top:778px;font-size:12px;line-height:19px">主<br>动<br>买</div>
<div class="a" style="left:1311px;top:835px;font-size:12px;line-height:19px">主<br>动<br>卖</div>
<div class="a" style="left:1330px;top:778px;font-size:12px;line-height:19px">大<br>中<br>小</div>
<div class="a" style="left:1330px;top:835px;font-size:12px;line-height:19px">大<br>中<br>小</div>
<div class="a" style="left:1365px;top:778px;font-size:12px;line-height:19px;letter-spacing:-.1px">28万手<br>11万手<br>41193手</div>
<div class="a" style="left:1365px;top:835px;font-size:12px;line-height:19px;letter-spacing:-.1px">27万手<br>99462手<br>38561手</div>
<div class="a" style="left:1424px;top:778px;font-size:12px;line-height:19px;letter-spacing:.4px">32.60%<br>12.68%<br>4.77%</div>
<div class="a" style="left:1424px;top:835px;font-size:12px;line-height:19px;letter-spacing:.4px">31.63%<br>11.52%<br>4.47%</div>
<div class="a" style="left:1314px;top:892px;font-size:12px;line-height:19px">不明</div>
<div class="a" style="left:1365px;top:892px;font-size:12px;line-height:19px;letter-spacing:-.1px">20192手</div>
<div class="a" style="left:1424px;top:892px;font-size:12px;line-height:19px;letter-spacing:.4px">2.34%</div>

<!-- ticker -->
<div class="tk" style="left:12px">腾落指数的应用技巧(1)</div>
<div class="tk" style="left:190px">智远理财财富管理计划VIP组合通山煤国际、中工国际逆市上涨!</div>
<div class="tk" style="left:572px">热烈祝贺南玻2010年公司债券即将公开发行</div>
<div class="tk" style="left:840px">工银瑞信深证红利ETF热销中</div>
<div class="tk" style="left:1030px">老产品夺冠,招商证券智远内需10月20日起发行</div>
<div class="tk" style="left:1322px">保护基金公司现正开展“十月投资者信心调查”,欢迎您的参与</div>

<!-- status -->
<div class="s sb" style="left:19px;color:#e06000;font-size:13px">观察员</div>
<div class="s" style="left:60px">上证</div><div class="s sb" style="left:86px;color:#008000">2975.04</div><div class="s sb" style="left:146px;color:#008000">-8.49</div><div class="s sb" style="left:184px;color:#008000">-0.28%</div><div class="s" style="left:230px">1972亿</div>
<div class="s" style="left:272px">沪深</div><div class="s sb" style="left:296px;color:#e00000">3378.66</div><div class="s sb" style="left:360px;color:#e00000">3.97</div><div class="s sb" style="left:395px;color:#e00000">0.12%</div><div class="s" style="left:442px">1632亿</div>
<div class="s" style="left:482px">创业</div><div class="s sb" style="left:508px;color:#e00000">1013.45</div><div class="s sb" style="left:566px;color:#e00000">21.61</div><div class="s sb" style="left:606px;color:#e00000">2.18%</div><div class="s" style="left:652px">80.08亿</div>
<div class="s" style="left:806px">通达信V版</div>

<!-- watermark -->
<svg width="1680" height="970" viewBox="0 0 1680 970" style="pointer-events:none"><g clip-path="url(#wm)" font-family="Liberation Sans, DejaVu Sans, sans-serif" font-weight="bold" font-size="62" fill="#fff" fill-opacity=".32"><text x="1168" y="463" textLength="142" lengthAdjust="spacingAndGlyphs">ɯɯɯ</text><text y="463" x="1313 1347 1375 1400 1437 1488 1530 1550 1583 1630">.tdxzb.com</text></g></svg>
</body></html>
